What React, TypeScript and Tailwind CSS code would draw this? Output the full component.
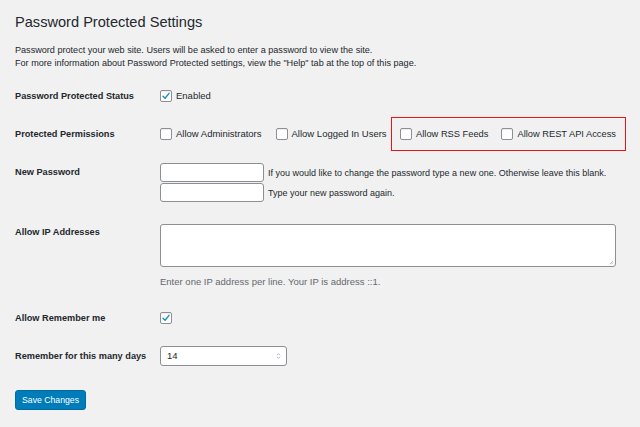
import React from 'react'

const Check = ({ checked }: { checked?: boolean }) => (
  <span className="inline-flex h-[12px] w-[12px] shrink-0 items-center justify-center rounded-[2px] border border-[#8c8f94] bg-white shadow-[inset_0_1px_1px_rgba(0,0,0,0.08)]">
    {checked && (
      <svg viewBox="0 0 12 12" className="h-[10px] w-[10px]">
        <path d="M2.4 6.2 L4.9 8.7 L9.6 2.8" fill="none" stroke="#1e8cbe" strokeWidth="1.7" strokeLinecap="round" strokeLinejoin="round" />
      </svg>
    )}
  </span>
)

const CheckItem = ({ label, checked }: { label: string; checked?: boolean }) => (
  <span className="flex items-center gap-[4px]">
    <Check checked={checked} />
    <span>{label}</span>
  </span>
)

const Label = ({ children, className = '' }: { children: React.ReactNode; className?: string }) => (
  <div className={`w-[145px] shrink-0 text-[9.2px] font-bold ${className}`}>{children}</div>
)

const App = () => {
  return (
    <div
      className="min-h-[427px] w-[640px] bg-[#f1f1f1] px-[15px] pt-[12px] text-[9.5px] leading-[12px] text-[#23282d]"
      style={{ fontFamily: '"Liberation Sans", Arial, sans-serif' }}
    >
      <h1 className="text-[14.6px] leading-[20px] font-normal">Password Protected Settings</h1>
      <div className="mt-[12px] text-[9.1px] leading-[12.5px]">
        <p>Password protect your web site. Users will be asked to enter a password to view the site.</p>
        <p>For more information about Password Protected settings, view the "Help" tab at the top of this page.</p>
      </div>

      <div className="mt-[15px] flex h-[24px] items-center">
        <Label>Password Protected Status</Label>
        <CheckItem label="Enabled" checked />
      </div>

      <div className="mt-[9px] flex h-[34px] items-center">
        <Label>Protected Permissions</Label>
        <div className="flex items-center gap-[14px]">
          <CheckItem label="Allow Administrators" />
          <CheckItem label="Allow Logged In Users" />
          <div className="-mx-[10px] flex h-[34px] items-center gap-[13px] border-[1.5px] border-[#e3171b] pl-[8.5px] pr-[9.5px] text-[9.3px]">
            <CheckItem label="Allow RSS Feeds" />
            <CheckItem label="Allow REST API Access" />
          </div>
        </div>
      </div>

      <div className="mt-[12px] flex items-start">
        <Label className="pt-[3px]">New Password</Label>
        <div className="flex flex-col gap-[1px] text-[9px]">
          <div className="flex items-center gap-[4px]">
            <div className="h-[19px] w-[104px] rounded-[3px] border border-[#8c8f94] bg-white" />
            <span>If you would like to change the password type a new one. Otherwise leave this blank.</span>
          </div>
          <div className="flex items-center gap-[4px]">
            <div className="h-[19px] w-[104px] rounded-[3px] border border-[#8c8f94] bg-white" />
            <span>Type your new password again.</span>
          </div>
        </div>
      </div>

      <div className="mt-[22px] flex items-start">
        <Label className="pt-[2px]">Allow IP Addresses</Label>
        <div className="flex flex-col">
          <div className="relative h-[43px] w-[456px] rounded-[3px] border border-[#8c8f94] bg-white">
            <svg viewBox="0 0 6 6" className="absolute bottom-[1px] right-[1px] h-[5px] w-[5px]">
              <path d="M1 5 L5 1 M3 5 L5 3" stroke="#9a9a9a" strokeWidth="0.8" />
            </svg>
          </div>
          <p className="mt-[9px] text-[#646970]">Enter one IP address per line. Your IP is address ::1.</p>
        </div>
      </div>

      <div className="mt-[24px] flex h-[12px] items-center">
        <Label>Allow Remember me</Label>
        <Check checked />
      </div>

      <div className="mt-[22px] flex items-center">
        <Label>Remember for this many days</Label>
        <div className="flex h-[20px] w-[127px] items-center justify-between rounded-[3px] border border-[#8c8f94] bg-white pl-[6px] pr-[5px]">
          <span>14</span>
          <svg viewBox="0 0 6 10" className="h-[8px] w-[5px]">
            <path d="M1 4 L3 2 L5 4 M1 6 L3 8 L5 6" fill="none" stroke="#9a9a9a" strokeWidth="0.9" />
          </svg>
        </div>
      </div>

      <button className="mt-[24px] h-[20px] w-[71px] rounded-[3px] border border-[#006ba1] bg-[#007cba] text-[8.7px] leading-[18px] text-white">
        Save Changes
      </button>
    </div>
  )
}

export default App
